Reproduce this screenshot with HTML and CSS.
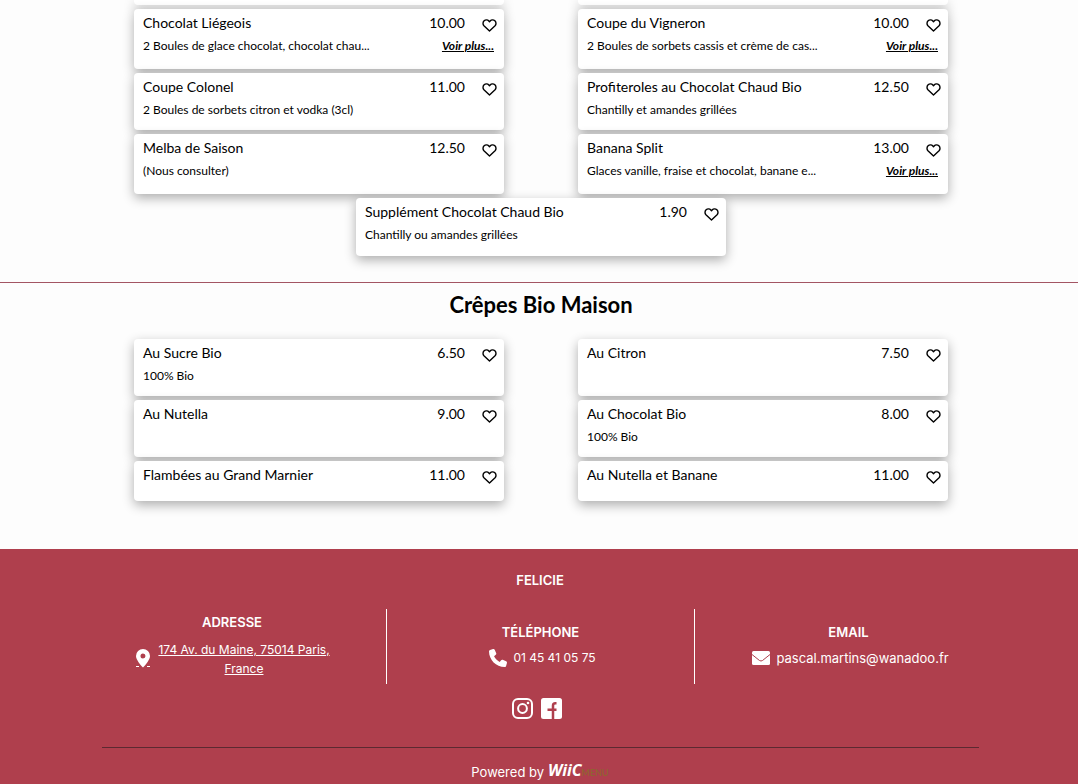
FILE: index.html
```html
<!DOCTYPE html>
<html lang="fr">
<head>
<meta charset="utf-8">
<meta name="viewport" content="width=device-width, initial-scale=1">
<title>Felicie</title>
<link rel="stylesheet" href="styles.css">
</head>
<body>
<svg class="sprite" aria-hidden="true">
  <symbol id="heart" viewBox="0 0 16 14"><path d="M8 12.900 2 7.300C.6 5.800.7 3.300 2.200 1.900c1.500-1.400 3.800-1.300 5.100.2L8 2.900l.7-.8c1.300-1.500 3.600-1.600 5.100-.2 1.500 1.400 1.600 3.900.2 5.400z" fill="none" stroke="currentColor" stroke-width="1.500" stroke-linejoin="round"/></symbol>
</svg>
<main>
  <section class="menu">
    <div class="grid">
      <div class="card tail"></div>
      <div class="card tail"></div>
      <article class="card tall">
        <h3>Chocolat Liégeois</h3><span class="price">10.00</span>
        <button class="like" aria-label="Favori"><svg><use href="#heart"/></svg></button>
        <p>2 Boules de glace chocolat, chocolat chau...</p><a class="more" href="#">Voir plus...</a>
      </article>
      <article class="card tall">
        <h3>Coupe du Vigneron</h3><span class="price">10.00</span>
        <button class="like" aria-label="Favori"><svg><use href="#heart"/></svg></button>
        <p>2 Boules de sorbets cassis et crème de cas...</p><a class="more" href="#">Voir plus...</a>
      </article>
      <article class="card">
        <h3>Coupe Colonel</h3><span class="price">11.00</span>
        <button class="like" aria-label="Favori"><svg><use href="#heart"/></svg></button>
        <p>2 Boules de sorbets citron et vodka (3cl)</p>
      </article>
      <article class="card">
        <h3>Profiteroles au Chocolat Chaud Bio</h3><span class="price">12.50</span>
        <button class="like" aria-label="Favori"><svg><use href="#heart"/></svg></button>
        <p>Chantilly et amandes grillées</p>
      </article>
      <article class="card tall">
        <h3>Melba de Saison</h3><span class="price">12.50</span>
        <button class="like" aria-label="Favori"><svg><use href="#heart"/></svg></button>
        <p>(Nous consulter)</p>
      </article>
      <article class="card tall">
        <h3>Banana Split</h3><span class="price">13.00</span>
        <button class="like" aria-label="Favori"><svg><use href="#heart"/></svg></button>
        <p>Glaces vanille, fraise et chocolat, banane e...</p><a class="more" href="#">Voir plus...</a>
      </article>
      <article class="card single">
        <h3>Supplément Chocolat Chaud Bio</h3><span class="price">1.90</span>
        <button class="like" aria-label="Favori"><svg><use href="#heart"/></svg></button>
        <p>Chantilly ou amandes grillées</p>
      </article>
    </div>
  </section>
  <section class="menu crepes">
    <h2>Crêpes Bio Maison</h2>
    <div class="grid">
      <article class="card">
        <h3>Au Sucre Bio</h3><span class="price">6.50</span>
        <button class="like" aria-label="Favori"><svg><use href="#heart"/></svg></button>
        <p>100% Bio</p>
      </article>
      <article class="card">
        <h3>Au Citron</h3><span class="price">7.50</span>
        <button class="like" aria-label="Favori"><svg><use href="#heart"/></svg></button>
      </article>
      <article class="card">
        <h3>Au Nutella</h3><span class="price">9.00</span>
        <button class="like" aria-label="Favori"><svg><use href="#heart"/></svg></button>
      </article>
      <article class="card">
        <h3>Au Chocolat Bio</h3><span class="price">8.00</span>
        <button class="like" aria-label="Favori"><svg><use href="#heart"/></svg></button>
        <p>100% Bio</p>
      </article>
      <article class="card">
        <h3>Flambées au Grand Marnier</h3><span class="price">11.00</span>
        <button class="like" aria-label="Favori"><svg><use href="#heart"/></svg></button>
      </article>
      <article class="card">
        <h3>Au Nutella et Banane</h3><span class="price">11.00</span>
        <button class="like" aria-label="Favori"><svg><use href="#heart"/></svg></button>
      </article>
    </div>
  </section>
</main>
<footer>
  <h4>FELICIE</h4>
  <div class="contacts">
    <div class="contact">
      <h4>ADRESSE</h4>
      <a class="address" href="#">
        <svg class="pin" viewBox="0 0 14 20"><path d="M7 0a7 7 0 0 1 7 7c0 3.500-4.500 9-7 11.500C4.500 16 0 10.500 0 7a7 7 0 0 1 7-7zm0 4.500a2.500 2.500 0 1 0 0 5 2.500 2.500 0 0 0 0-5z" fill="currentColor" fill-rule="evenodd"/><path d="M0 17.500h3M11 17.500h3" stroke="currentColor"/></svg>
        <span>174 Av. du Maine, 75014 Paris, France</span>
      </a>
    </div>
    <div class="contact">
      <h4>TÉLÉPHONE</h4>
      <a href="#">
        <svg class="phone" viewBox="0 0 512 512"><path fill="currentColor" d="M165 25c-8-19-28-29-48-23L29 26C12 31 0 46 0 64c0 247 201 448 448 448 18 0 33-12 38-29l24-88c6-20-4-40-23-48l-96-40c-16-7-35-2-46 12l-41 49C234 334 178 277 144 207l49-40c14-11 19-30 12-46z"/></svg>
        <span>01 45 41 05 75</span>
      </a>
    </div>
    <div class="contact">
      <h4>EMAIL</h4>
      <a class="email" href="#">
        <svg class="mail" viewBox="0 0 18 14"><rect width="18" height="14" rx="1.500" fill="currentColor"/><path d="m0 3.500 7.500 6q1.500 1 3 0l7.500-6" fill="none" stroke="#af3f4d"/></svg>
        <span>pascal.martins@wanadoo.fr</span>
      </a>
    </div>
  </div>
  <div class="social">
    <a href="#" aria-label="Instagram"><svg viewBox="0 0 21 21"><rect x="1" y="1" width="19" height="19" rx="5" fill="none" stroke="currentColor" stroke-width="2"/><circle cx="10.500" cy="10.500" r="4.400" fill="none" stroke="currentColor" stroke-width="2"/><circle cx="16" cy="5" r="1.300" fill="currentColor"/></svg></a>
    <a href="#" aria-label="Facebook"><svg viewBox="0 0 21 21"><rect width="21" height="21" rx="2.500" fill="currentColor"/><path d="M15.500 5.200h-1.200c-1.800 0-2.300.9-2.300 2.300V21M6.500 11.800h9" fill="none" stroke="#af3f4d" stroke-width="2.500"/></svg></a>
  </div>
  <div class="powered">
    <span>Powered by</span>
    <a class="brand" href="#"><b>WiiC</b><small>MENU</small></a>
  </div>
</footer>
</body>
</html>
```
FILE: styles.css
```css
* { box-sizing: border-box; }
body { margin: 0; background: #fdfdfd; color: #000; font-family: Lato, "Liberation Sans", sans-serif; }
h2, h3, h4, p { margin: 0; }
.sprite { display: none; }

.menu { padding-left: 4px; }
.grid {
  display: grid;
  grid-template-columns: repeat(2, minmax(0, 370px));
  justify-content: center;
  gap: 4px 74px;
}
.card {
  display: grid;
  grid-template-columns: 1fr auto 15px;
  grid-template-rows: 22px auto;
  align-content: start;
  padding: 3px 8px 8px 9px;
  background: #fff;
  border-radius: 4px;
  box-shadow: 0 4px 12px rgba(0, 0, 0, .32);
}
.tail { height: 5px; padding: 0; border-radius: 0 0 4px 4px; }
.tall { min-height: 60px; }
.single { grid-column: 1 / -1; justify-self: center; width: calc(50% - 37px); min-height: 58px; }
.card h3, .price { font-size: 14px; font-weight: 400; line-height: 22px; }
.like { padding: 0; margin: 6px 0 0 1px; width: 14px; height: 14px; border: 0; background: none; color: #000; }
.like svg { display: block; width: 15px; height: 13px; }
.price { margin-right: 16px; }
.card p { grid-column: 1; font-size: 12px; line-height: 24px; white-space: nowrap; }
.more {
  grid-column: 2 / 4;
  grid-row: 2;
  justify-self: end;
  margin-right: 2px;
  font-size: 12px;
  font-style: italic;
  font-weight: 700;
  line-height: 24px;
  color: #000;
}

.crepes { margin-top: 26px; padding-bottom: 48px; border-top: 1px solid #a35563; }
.crepes h2 { margin-bottom: 12px; font-size: 22px; line-height: 44px; text-align: center; }
.crepes .card:nth-last-child(-n+2) { min-height: 40px; }

footer { padding: 20px 0 0 2px; background: #af3f4d; color: #fff; font-family: Inter, "Liberation Sans", sans-serif; font-size: 13px; }
footer h4 { font-size: 13px; font-weight: 600; line-height: 22px; text-align: center; }
footer a { color: inherit; text-decoration: none; }
.contacts { display: grid; grid-template-columns: repeat(3, 1fr); max-width: 924px; min-height: 75px; margin: 18px auto 14px; }
.contact { display: flex; flex-direction: column; justify-content: center; align-items: center; }
.contact + .contact { border-left: 1px solid #fff; }
.contact a { display: flex; align-items: center; gap: 6px; min-height: 30px; padding-left: 4px; font-size: 12px; }
.contact .email { font-size: 13px; }
.contact .address { margin-top: 7px; padding-bottom: 4px; text-align: center; line-height: 19px; }
.address span { max-width: 176px; text-decoration: underline; }
.pin { width: 14px; height: 20px; }
.phone { width: 18px; height: 18px; }
.mail { width: 18px; height: 14px; }
.social { display: flex; justify-content: center; gap: 8px; padding-right: 6px; }
.social svg { display: block; width: 21px; height: 21px; }
.powered {
  display: flex;
  justify-content: center;
  align-items: center;
  gap: 4px;
  max-width: 877px;
  margin: 28px auto 0;
  padding-top: 10px;
  border-top: 1px solid #5c2931;
  line-height: 24px;
}
.brand b { font: italic 700 16px/24px "Open Sans", sans-serif; }
.brand small { font: 9px/24px Lato, sans-serif; color: #8a6a2c; }
```
